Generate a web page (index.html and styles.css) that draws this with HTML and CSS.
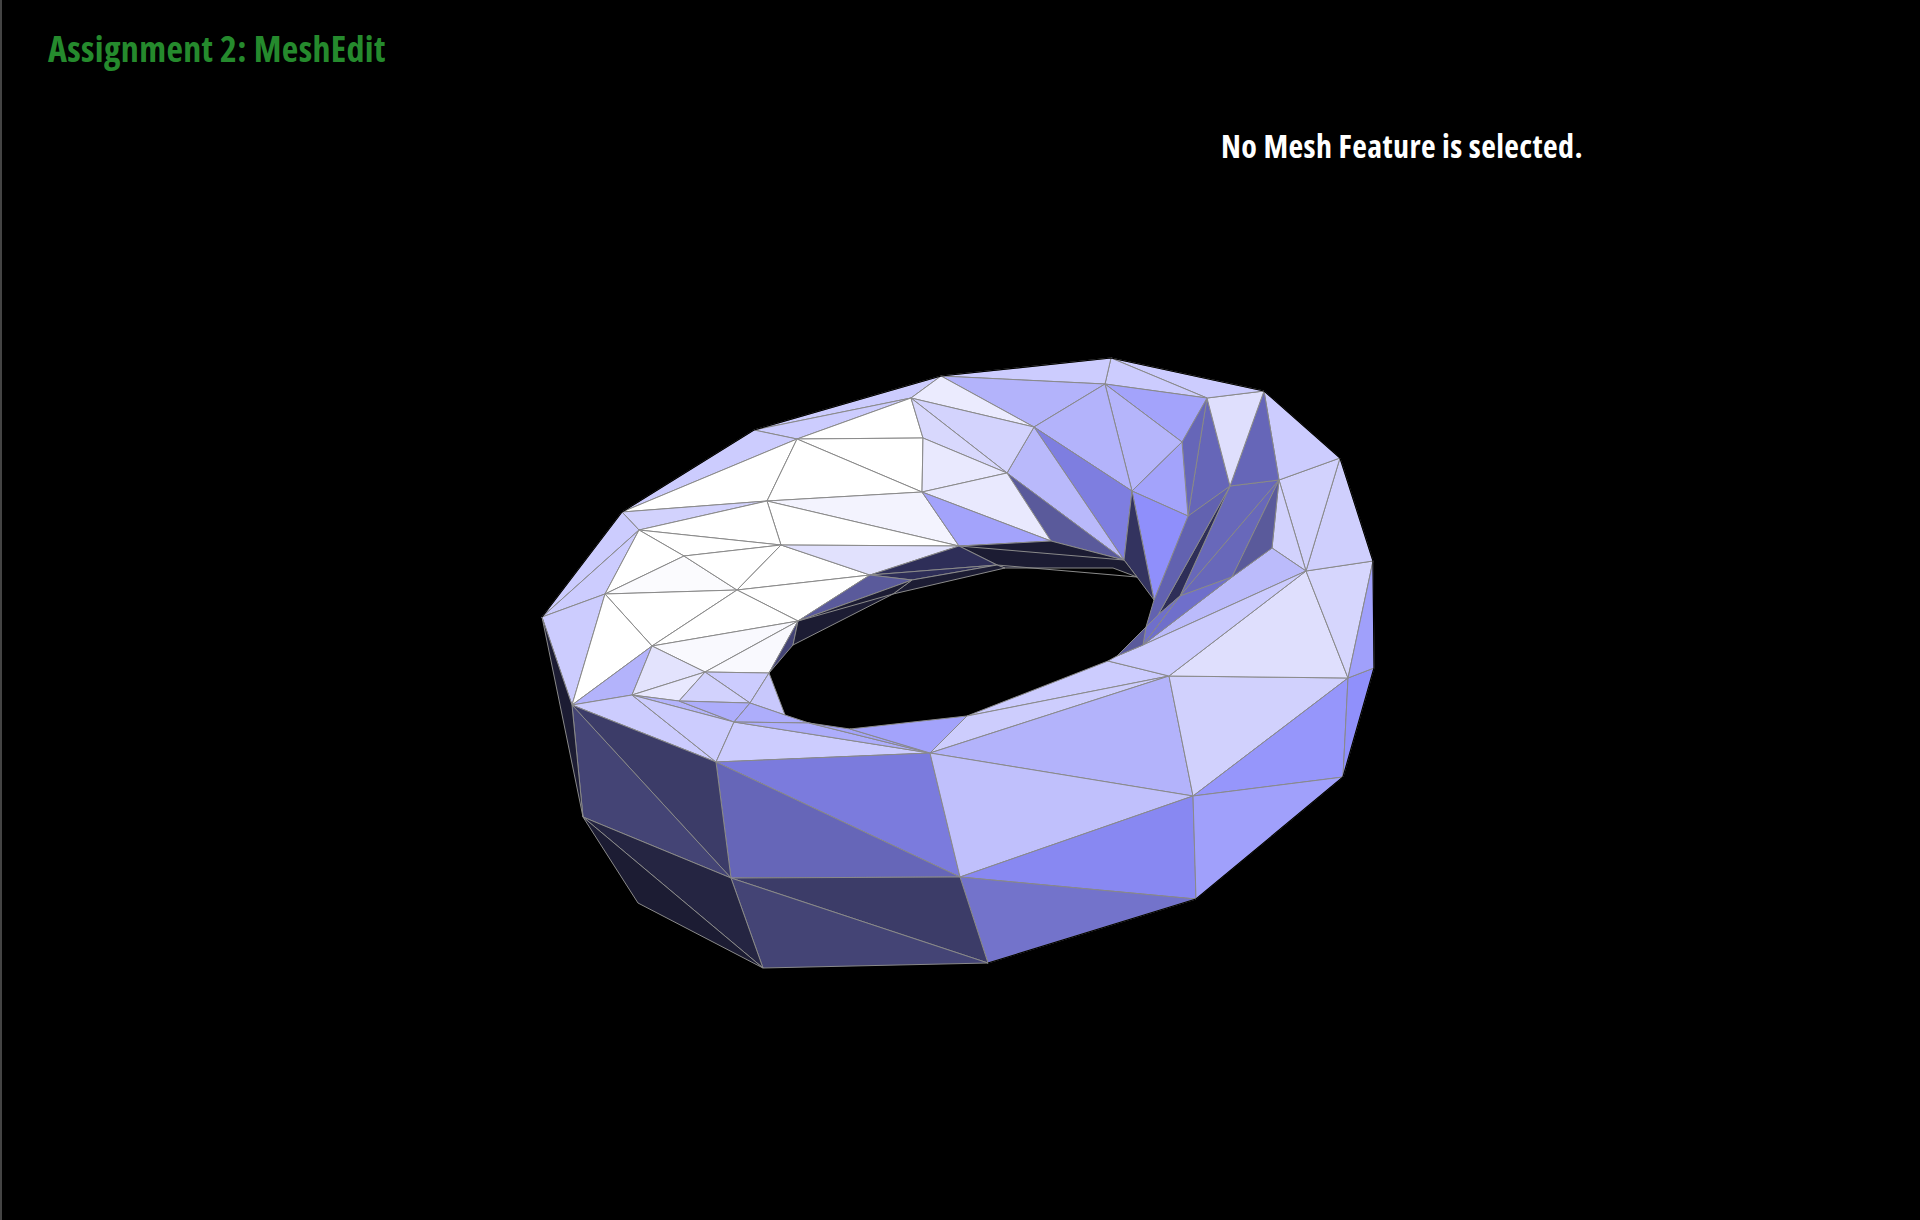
FILE: index.html
```html
<!DOCTYPE html>
<html lang="en">
<head>
<meta charset="utf-8">
<title>Assignment 2: MeshEdit</title>
<link rel="stylesheet" href="styles.css">
</head>
<body>
<main class="viewport">
  <svg class="mesh" viewBox="0 0 1920 1220" aria-hidden="true">
    <!-- top band -->
    <polygon class="f-ccf" points="754,430 941,376 911,398"/>
    <polygon class="f-ccf" points="754,430 911,398 797,439"/>
    <polygon class="f-ccf" points="622,512 754,430 797,439"/>
    <polygon class="f-fff" points="797,439 911,398 923,438"/>
    <polygon class="f-fff" points="622,512 797,439 767,501"/>
    <polygon class="f-fff" points="797,439 923,438 922,492"/>
    <polygon class="f-fff" points="797,439 922,492 767,501"/>
    <polygon class="f-f3" points="767,501 922,492 959,546"/>
    <polygon class="f-fff" points="767,501 959,546 781,545"/>
    <polygon class="f-d2" points="622,512 767,501 639,530"/>
    <polygon class="f-ccf" points="542,617 622,512 639,530"/>
    <polygon class="f-ccf" points="542,617 639,530 605,594"/>
    <polygon class="f-ccf" points="542,617 605,594 572,705"/>
    <polygon class="f-fff" points="639,530 767,501 781,545"/>
    <polygon class="f-fff" points="639,530 781,545 684,556"/>
    <polygon class="f-fff" points="639,530 684,556 605,594"/>
    <polygon class="f-fb" points="605,594 684,556 737,590"/>
    <polygon class="f-fff" points="684,556 781,545 737,590"/>
    <polygon class="f-fff" points="781,545 870,575 737,590"/>
    <polygon class="f-e1" points="781,545 959,546 870,575"/>
    <polygon class="f-fff" points="737,590 870,575 798,621"/>
    <polygon class="f-fff" points="605,594 737,590 652,646"/>
    <polygon class="f-fff" points="605,594 652,646 572,705"/>
    <polygon class="f-fff" points="652,646 737,590 798,621"/>
    <polygon class="f-f9" points="652,646 798,621 705,672"/>
    <polygon class="f-f9" points="705,672 798,621 769,673"/>
    <polygon class="f-444" points="769,673 798,621 793,645"/>
    <!-- inner left cluster -->
    <polygon class="f-b3" points="572,705 652,646 632,695"/>
    <polygon class="f-e3" points="652,646 705,672 632,695"/>
    <polygon class="f-e8" points="632,695 705,672 679,701"/>
    <polygon class="f-ccf" points="705,672 769,673 750,703"/>
    <polygon class="f-d2" points="705,672 750,703 679,701"/>
    <polygon class="f-c8" points="769,673 785,715 750,703"/>
    <polygon class="f-b3" points="632,695 679,701 734,722"/>
    <polygon class="f-ad" points="679,701 750,703 734,722"/>
    <polygon class="f-ad" points="750,703 785,715 809,723 734,722"/>
    <polygon class="f-ccf" points="572,705 632,695 716,762"/>
    <polygon class="f-ccf" points="632,695 734,722 716,762"/>
    <polygon class="f-ccf" points="734,722 930,753 716,762"/>
    <polygon class="f-ad" points="734,722 809,723 930,753"/>
    <polygon class="f-a3" points="809,723 850,729 930,753"/>
    <polygon class="f-a3" points="850,729 967,716 930,753"/>
    <!-- front band -->
    <polygon class="f-ccf" points="967,716 1108,661 1169,676"/>
    <polygon class="f-cd" points="967,716 1169,676 930,753"/>
    <polygon class="f-7b" points="716,762 930,753 960,877"/>
    <polygon class="f-66" points="716,762 960,877 731,878"/>
    <polygon class="f-b3" points="930,753 1169,676 1193,796"/>
    <polygon class="f-c0" points="930,753 1193,796 960,877"/>
    <polygon class="f-88" points="960,877 1193,796 1196,899"/>
    <polygon class="f-73" points="960,877 1196,899 988,963"/>
    <polygon class="f-3c" points="731,878 960,877 988,963"/>
    <polygon class="f-444" points="731,878 988,963 763,968"/>
    <polygon class="f-3c" points="572,705 716,762 731,878"/>
    <polygon class="f-444" points="572,705 731,878 583,817"/>
    <polygon class="f-25" points="583,817 731,878 763,968"/>
    <polygon class="f-1c" points="583,817 763,968 638,903"/>
    <polygon class="f-1c" points="542,617 572,705 583,817"/>
    <!-- right band -->
    <polygon class="f-d1" points="1169,676 1348,678 1193,796"/>
    <polygon class="f-96" points="1193,796 1348,678 1343,777"/>
    <polygon class="f-a0" points="1193,796 1343,777 1196,899"/>
    <polygon class="f-90" points="1348,678 1374,668 1343,777"/>
    <polygon class="f-df" points="1169,676 1306,571 1348,678"/>
    <polygon class="f-d6" points="1348,678 1306,571 1373,561"/>
    <polygon class="f-a0" points="1348,678 1373,561 1374,668"/>
    <polygon class="f-cf" points="1306,571 1340,458 1373,561"/>
    <polygon class="f-d2" points="1306,571 1279,480 1340,458"/>
    <polygon class="f-ccf" points="1264,391 1340,458 1279,480"/>
    <polygon class="f-d2" points="1279,480 1306,571 1272,548"/>
    <polygon class="f-bb" points="1272,548 1306,571 1143,645 1232,577"/>
    <polygon class="f-ccf" points="1143,645 1306,571 1169,676 1108,661 1117,656"/>
    <!-- folded area, right of hole -->
    <polygon class="f-68" points="1230,486 1279,480 1180,596"/>
    <polygon class="f-68" points="1279,480 1232,577 1180,596"/>
    <polygon class="f-5a" points="1279,480 1272,548 1232,577"/>
    <polygon class="f-6f" points="1180,596 1232,577 1143,645"/>
    <polygon class="f-2e" points="1230,486 1180,596 1158,615"/>
    <polygon class="f-62" points="1188,516 1230,486 1158,615 1146,627 1154,600"/>
    <polygon class="f-6f" points="1180,596 1143,645 1146,627 1158,615"/>
    <polygon class="f-5a" points="1146,627 1143,645 1117,656"/>
    <polygon class="f-66" points="1207,398 1230,486 1188,516"/>
    <polygon class="f-66" points="1207,398 1188,516 1182,442"/>
    <polygon class="f-66" points="1264,391 1279,480 1230,486"/>
    <polygon class="f-df" points="1207,398 1264,391 1230,486"/>
    <polygon class="f-ccf" points="1111,358 1264,391 1207,398"/>
    <polygon class="f-ccf" points="1111,358 1207,398 1105,384"/>
    <polygon class="f-ccf" points="941,376 1111,358 1105,384"/>
    <polygon class="f-b3" points="941,376 1105,384 1034,427"/>
    <polygon class="f-a3" points="1105,384 1207,398 1182,442"/>
    <polygon class="f-b5" points="1105,384 1182,442 1132,491"/>
    <polygon class="f-b3" points="1105,384 1132,491 1034,427"/>
    <polygon class="f-7e" points="1034,427 1132,491 1124,560"/>
    <polygon class="f-b9" points="1007,473 1034,427 1124,560"/>
    <polygon class="f-5a" points="1007,473 1124,560 1051,541"/>
    <polygon class="f-a3" points="1182,442 1188,516 1132,491"/>
    <polygon class="f-8f" points="1132,491 1188,516 1154,600"/>
    <polygon class="f-33" points="1132,491 1154,600 1137,577 1124,560"/>
    <!-- top middle -->
    <polygon class="f-eb" points="941,376 1034,427 911,398"/>
    <polygon class="f-d3" points="911,398 1034,427 1007,473"/>
    <polygon class="f-d8" points="911,398 1007,473 923,438"/>
    <polygon class="f-e9" points="923,438 1007,473 922,492"/>
    <polygon class="f-e9" points="922,492 1007,473 1051,541"/>
    <polygon class="f-a3" points="922,492 1051,541 959,546"/>
    <!-- inside of the hole -->
    <polygon class="f-1c" points="959,546 1051,541 1124,560 1137,577 1113,568 1005,568 997,565"/>
    <polyline class="edge" points="959,546 1124,560"/>
    <polyline class="edge" points="997,565 1137,577"/>
    <polygon class="f-2e" points="870,575 959,546 997,565"/>
    <polygon class="f-2e" points="870,575 997,565 912,580"/>
    <polygon class="f-1c" points="912,580 997,565 1005,568 893,594"/>
    <polygon class="f-5a" points="870,575 912,580 798,621"/>
    <polygon class="f-1c" points="798,621 912,580 893,594 793,645"/>
    <polyline class="edge" points="798,621 893,594"/>
    <!-- lit silhouette carries no visible edge line -->
    <polyline class="rim" points="988,963 1196,899 1343,777 1374,668 1373,561 1340,458 1264,391 1111,358 941,376 754,430 622,512 542,617"/>
  </svg>
  <h1 class="title">Assignment 2: MeshEdit</h1>
  <p class="status">No Mesh Feature is selected.</p>
</main>
</body>
</html>
```
FILE: styles.css
```css
html, body {
  margin: 0;
  height: 100%;
  background: #000;
}

.viewport {
  position: relative;
  box-sizing: border-box;
  height: 1220px;
  padding: 24px 0 0 46px;
  border-left: 2px solid #444;
  background: #000;
  font-family: "Open Sans", "Noto Sans", sans-serif;
  font-stretch: condensed;
  font-weight: 700;
  overflow: hidden;
}

.mesh {
  position: absolute;
  left: -2px;
  top: 0;
  width: 1920px;
  height: 1220px;
}

.mesh polygon, .edge {
  stroke: #8a8a8a;
  stroke-width: 1;
  stroke-linejoin: round;
}

.edge { fill: none; }

.rim {
  fill: none;
  stroke: #000;
  stroke-width: 1.2;
  stroke-linejoin: round;
}

.title, .status {
  position: relative;
  margin: 0;
}

.title {
  color: #258a2d;
  font-size: 36px;
  line-height: 50px;
  font-weight: 700;
  letter-spacing: 0.33px;
}

.status {
  margin: 52px 0 0 1173px;
  color: #fff;
  font-size: 32px;
  line-height: 40px;
  letter-spacing: 0.4px;
}

.f-fff { fill: #fff; }
.f-fb { fill: #fbfbfe; }
.f-f9 { fill: #f9f9fe; }
.f-f3 { fill: #f3f3fe; }
.f-eb { fill: #ebebfe; }
.f-e9 { fill: #e9e9fe; }
.f-e8 { fill: #e8e8fe; }
.f-e3 { fill: #e3e3fd; }
.f-e1 { fill: #e1e1fd; }
.f-df { fill: #dfdffd; }
.f-d8 { fill: #d8d8fd; }
.f-d6 { fill: #d6d6fd; }
.f-d3 { fill: #d3d3fd; }
.f-d2 { fill: #d2d2fd; }
.f-d1 { fill: #d1d1fd; }
.f-cf { fill: #cfcffd; }
.f-cd { fill: #cdcdfd; }
.f-ccf { fill: #ccccfe; }
.f-c8 { fill: #c8c8fc; }
.f-c0 { fill: #c0c0fc; }
.f-bb { fill: #bbbbfb; }
.f-b9 { fill: #b9b9fb; }
.f-b5 { fill: #b5b5fb; }
.f-b3 { fill: #b3b3fb; }
.f-ad { fill: #adadfb; }
.f-a3 { fill: #a3a3fb; }
.f-a0 { fill: #a0a0fb; }
.f-96 { fill: #9696fb; }
.f-90 { fill: #9090fb; }
.f-8f { fill: #8f8ffb; }
.f-88 { fill: #8888f2; }
.f-7e { fill: #7e7ee0; }
.f-7b { fill: #7b7bdd; }
.f-73 { fill: #7373cb; }
.f-6f { fill: #6f6fcb; }
.f-68 { fill: #6868ba; }
.f-66 { fill: #6666b8; }
.f-62 { fill: #6262b0; }
.f-5a { fill: #5a5a9b; }
.f-444 { fill: #444475; }
.f-3c { fill: #3c3c68; }
.f-33 { fill: #33335f; }
.f-2e { fill: #2e2e58; }
.f-25 { fill: #252542; }
.f-1c { fill: #1c1c33; }
```
